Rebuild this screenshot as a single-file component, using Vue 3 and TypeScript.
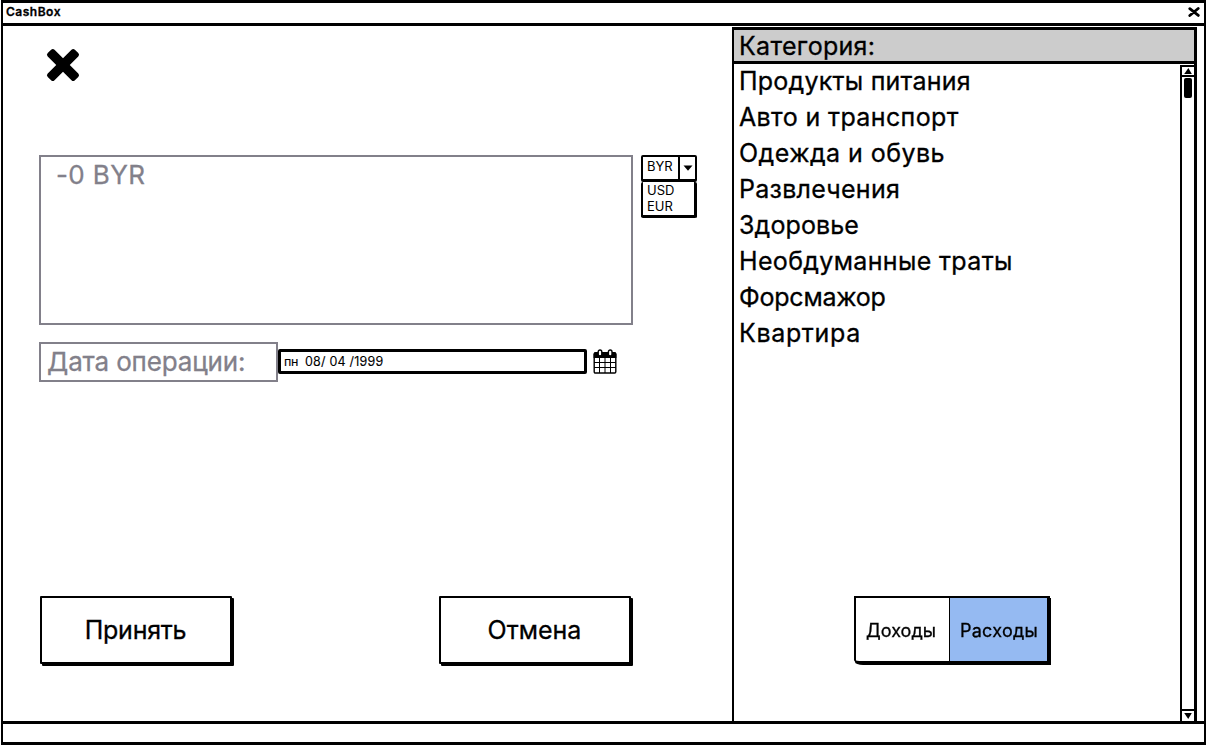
<script setup lang="ts">
import { ref } from 'vue'

interface Category {
  name: string
  tracking: number
}

const categories: Category[] = [
  { name: 'Продукты питания', tracking: 0.22 },
  { name: 'Авто и транспорт', tracking: 0.37 },
  { name: 'Одежда и обувь', tracking: 0.45 },
  { name: 'Развлечения', tracking: 0.27 },
  { name: 'Здоровье', tracking: 0.12 },
  { name: 'Необдуманные траты', tracking: 0.34 },
  { name: 'Форсмажор', tracking: -0.22 },
  { name: 'Квартира', tracking: 0.65 },
]

const currencies: string[] = ['USD', 'EUR']
const mode = ref<'income' | 'expense'>('expense')
</script>

<template>
  <div class="window">
    <header class="titlebar">
      <span class="title">CashBox</span>
      <svg class="close" width="12" height="10" viewBox="0 0 12 10">
        <path d="M1.8 1.7 L10.3 8.4 M10.2 1.5 L1.8 8.5" stroke="#000" stroke-width="2.8" stroke-linecap="round" />
      </svg>
    </header>

    <div class="body">
      <main class="form">
        <svg class="cross" width="34" height="34" viewBox="0 0 34 34">
          <g transform="rotate(45 17 17)">
            <rect x="-2.2" y="12.2" width="38.4" height="9.6" rx="2.4" />
            <rect x="12.2" y="-2.2" width="9.6" height="38.4" rx="2.4" />
          </g>
        </svg>

        <div class="amount-row">
          <div class="amount"><span>-0 BYR</span></div>
          <div class="combo">
            <div class="combo-head">
              <span class="combo-value">BYR</span>
              <span class="combo-arrow">
                <svg width="10" height="6" viewBox="0 0 10 6"><path d="M.5 .5 H9.5 L5 5.7Z" /></svg>
              </span>
            </div>
            <div class="combo-list">
              <span v-for="c in currencies" :key="c">{{ c }}</span>
            </div>
          </div>
        </div>

        <div class="date-row">
          <div class="date-label"><span>Дата операции:</span></div>
          <div class="date-field"><span class="day">пн</span><span class="date">08/ 04 /1999</span></div>
          <svg class="calendar" width="24" height="25" viewBox="0 0 24 25">
            <rect x="1.2" y="4" width="21.6" height="20" rx="1.2" fill="#fff" stroke="#000" stroke-width="1.4" />
            <path d="M.6 5 Q.6 3 2.6 3 H21.4 Q23.4 3 23.4 5 V9 H.6Z" />
            <path d="M6.5 8.5 V24 M12 8.5 V24 M17.5 8.5 V24 M1 13.5 H23 M1 18.5 H23" stroke="#000" stroke-width="1" />
            <rect x="5.2" y="1" width="3.6" height="6" rx="1.8" fill="#fff" stroke="#000" stroke-width="1.4" />
            <rect x="15.4" y="1" width="3.6" height="6" rx="1.8" fill="#fff" stroke="#000" stroke-width="1.4" />
          </svg>
        </div>

        <div class="actions">
          <button class="btn accept" type="button">Принять</button>
          <button class="btn cancel" type="button">Отмена</button>
        </div>
      </main>

      <aside class="panel">
        <div class="panel-head"><span>Категория:</span></div>
        <div class="panel-body">
          <div class="panel-content">
            <ul class="list">
              <li v-for="c in categories" :key="c.name">
                <span :style="{ letterSpacing: c.tracking + 'px' }">{{ c.name }}</span>
              </li>
            </ul>
            <div class="toggle">
              <button class="seg income" :class="{ on: mode === 'income' }" type="button" @click="mode = 'income'">Доходы</button>
              <button class="seg expense" :class="{ on: mode === 'expense' }" type="button" @click="mode = 'expense'">Расходы</button>
            </div>
          </div>
          <div class="scrollbar">
            <div class="scroll-btn up">
              <svg width="8" height="6" viewBox="0 0 8 6"><path d="M4.4 0 L7.8 6 H.2Z" /></svg>
            </div>
            <div class="track"><div class="thumb"></div></div>
            <div class="scroll-btn down">
              <svg width="8" height="6" viewBox="0 0 8 6"><path d="M.2 0 H7.8 L4.2 6Z" /></svg>
            </div>
          </div>
        </div>
      </aside>
    </div>

    <footer class="status"></footer>
  </div>
</template>

<style>
body {
  margin: 0;
  background: #fff;
  overflow: hidden;
}
</style>

<style scoped>
.window {
  box-sizing: border-box;
  width: 1205px;
  height: 745px;
  margin-left: 1px;
  border: 2px solid #000;
  border-top-width: 3px;
  border-bottom-width: 3px;
  display: flex;
  flex-direction: column;
  font-family: Inter, 'Open Sans', sans-serif;
  color: #000;
  -webkit-text-stroke: 0.3px currentColor;
}
.window * {
  box-sizing: border-box;
}
.window span {
  white-space: pre;
}
button {
  margin: 0;
  padding: 0;
  font-family: inherit;
  color: #000;
  background: #fff;
  -webkit-text-stroke: inherit;
}

.titlebar {
  height: 23px;
  flex: none;
  display: flex;
  justify-content: space-between;
  align-items: center;
  padding: 0 4px 2px 3px;
  border-bottom: 3px solid #000;
}
.title {
  font-size: 12px;
  line-height: 16px;
  font-weight: 600;
  letter-spacing: 0.5px;
}

.body {
  height: 695px;
  flex: none;
  display: flex;
}
.status {
  flex: 1;
  border-top: 3px solid #000;
}

.form {
  width: 728px;
  flex: none;
  display: flex;
  flex-direction: column;
  padding-left: 36px;
}
.cross {
  margin: 22px 0 0 7px;
  flex: none;
  overflow: visible;
}
.amount-row {
  display: flex;
  align-items: flex-start;
  margin-top: 73px;
  height: 170px;
}
.amount {
  width: 594px;
  height: 170px;
  border: 2px solid #82808a;
  padding: 2px 0 0 15px;
  font-size: 26px;
  line-height: 32px;
  letter-spacing: 0.4px;
  color: #82808a;
}
.combo {
  width: 56px;
  margin-left: 8px;
  font-size: 13px;
  line-height: 16px;
  -webkit-text-stroke: 0;
}
.combo-head {
  display: flex;
  height: 27px;
  border: 2px solid #000;
  border-bottom-width: 3px;
  border-radius: 2px;
}
.combo-value {
  width: 35px;
  padding: 1px 0 0 4px;
}
.combo-arrow {
  flex: 1;
  border-left: 2px solid #000;
  display: flex;
  align-items: center;
  justify-content: center;
}
.combo-list {
  display: flex;
  flex-direction: column;
  height: 36px;
  border: 3px solid #000;
  border-left-width: 2px;
  border-top-width: 0;
  border-radius: 2px;
  padding-left: 4px;
}

.date-row {
  display: flex;
  align-items: flex-start;
  margin-top: 17px;
  height: 40px;
}
.date-label {
  width: 239px;
  height: 40px;
  border: 2px solid #82808a;
  padding-left: 6px;
  font-size: 26px;
  line-height: 36px;
  letter-spacing: -0.15px;
  color: #82808a;
}
.date-field {
  width: 309px;
  height: 25px;
  margin-top: 7px;
  border: 3px solid #000;
  border-radius: 2px;
  display: flex;
  padding-left: 3px;
  font-size: 12.5px;
  line-height: 19px;
  letter-spacing: 0.2px;
  -webkit-text-stroke-width: 0.1px;
}
.day {
  width: 21px;
  letter-spacing: -0.4px;
}
.calendar {
  margin: 7px 0 0 6px;
}

.actions {
  display: flex;
  margin: 214px 0 0 1px;
}
.btn {
  width: 192px;
  height: 68px;
  border: 2px solid #000;
  border-radius: 1px;
  box-shadow: 2px 2px 0 #000;
  font-size: 25px;
  line-height: 30px;
}
.accept {
  letter-spacing: -0.25px;
  padding-right: 1px;
}
.cancel {
  margin-left: 207px;
  padding-right: 1px;
}

.panel {
  width: 465px;
  flex: none;
  display: flex;
  flex-direction: column;
  margin: 1px 0 0 1px;
  border: 3px solid #000;
  border-left-width: 2px;
  border-bottom: 0;
}
.panel-head {
  height: 34px;
  flex: none;
  background: #ccc;
  border-bottom: 3px solid #000;
  padding-left: 5px;
  font-size: 25px;
  line-height: 33px;
  letter-spacing: 0.3px;
}
.panel-body {
  flex: 1;
  display: flex;
  padding-top: 1px;
}
.panel-content {
  flex: 1;
  display: flex;
  flex-direction: column;
}
.list {
  list-style: none;
  margin: -2px 0 0;
  padding: 0 0 0 5px;
  font-size: 25px;
  line-height: 36px;
}
.toggle {
  display: flex;
  width: 196px;
  margin: 245px 0 0 120px;
  filter: drop-shadow(1px 2px 0 #000);
}
.seg {
  height: 67px;
  border: 2px solid #000;
  padding-top: 2px;
  font-size: 18px;
}
.income {
  width: 95px;
  border-right-width: 0;
  border-bottom-left-radius: 8px 3px;
  padding-right: 3px;
}
.expense {
  width: 101px;
  border-left-width: 1px;
  border-right-width: 3px;
  padding-left: 1px;
  letter-spacing: 0.25px;
}
.seg.on {
  background: #95baf2;
}

.scrollbar {
  width: 14px;
  display: flex;
  flex-direction: column;
  border-left: 2px solid #000;
}
.scroll-btn {
  height: 12px;
  flex: none;
  display: flex;
  align-items: center;
  justify-content: center;
  border: 0 solid #000;
}
.up {
  border-top-width: 2px;
  border-bottom-width: 2px;
}
.down {
  border-top-width: 2px;
}
.track {
  flex: 1;
  padding: 1px 2px 0 2px;
}
.thumb {
  height: 20px;
  width: 8px;
  background: #000;
  border-radius: 2px;
}
</style>
